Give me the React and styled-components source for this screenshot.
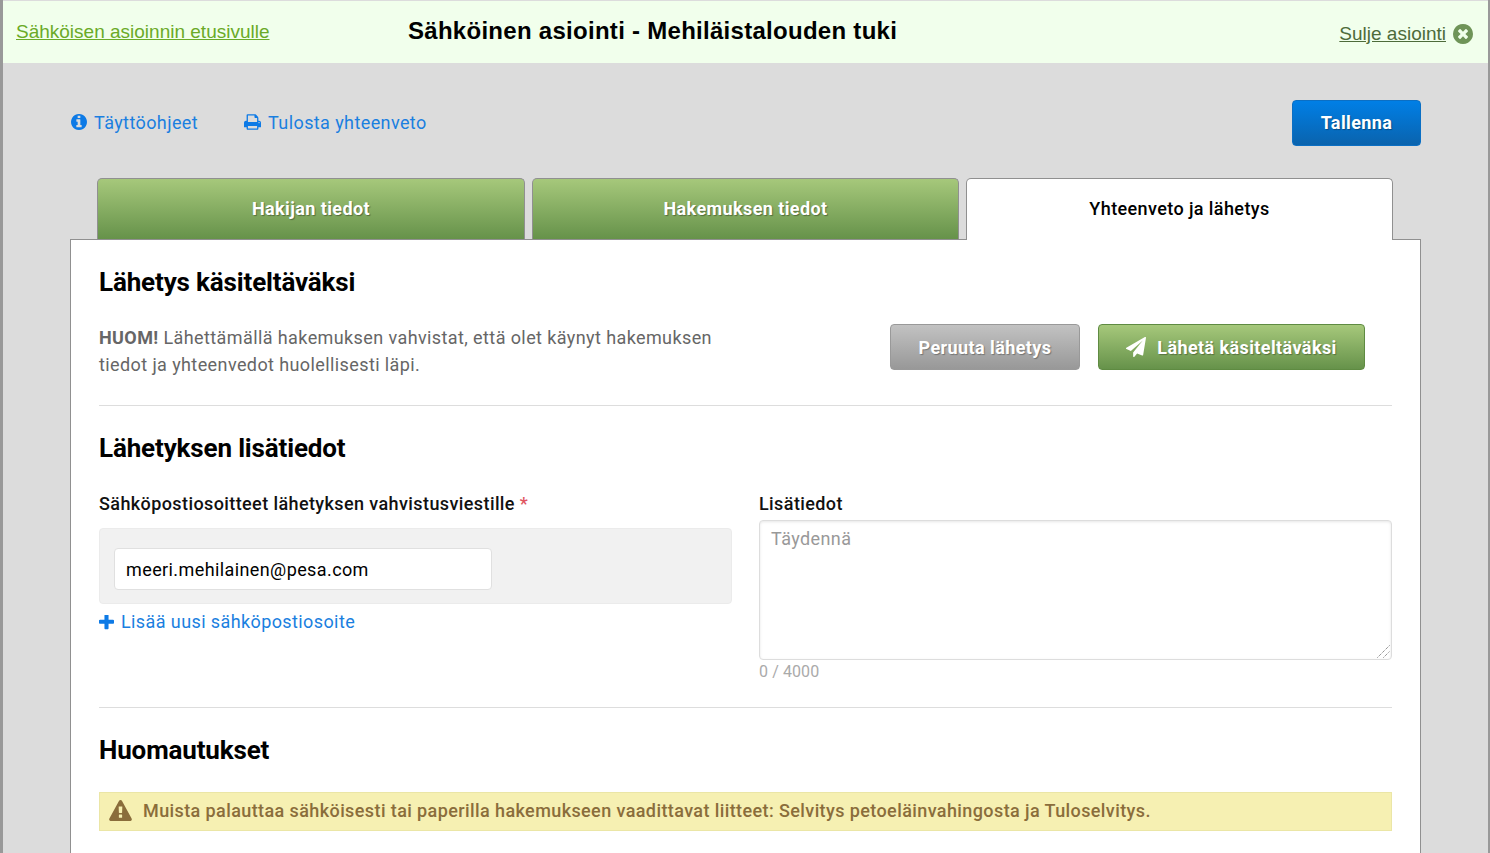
import React from 'react';
import styled, { createGlobalStyle } from 'styled-components';

const GlobalStyle = createGlobalStyle`
  html, body {
    margin: 0;
    padding: 0;
    height: 100%;
    overflow: hidden;
    background: #fff;
  }
  * { box-sizing: border-box; }
`;

// Font Awesome 4 style glyphs, viewBox cropped to the shape
const ICONS = {
  info: {
    box: '128 128 1536 1536',
    d: 'M1152 1376v-160q0-14-9-23t-23-9h-96v-512q0-14-9-23t-23-9h-320q-14 0-23 9t-9 23v160q0 14 9 23t23 9h96v320h-96q-14 0-23 9t-9 23v160q0 14 9 23t23 9h448q14 0 23-9t9-23zm-128-896v-160q0-14-9-23t-23-9h-192q-14 0-23 9t-9 23v160q0 14 9 23t23 9h192q14 0 23-9t9-23zm640 416q0 209-103 385.5t-279.5 279.5-385.5 103-385.5-103-279.5-279.5-103-385.5 103-385.5 279.5-279.5 385.5-103 385.5 103 279.5 279.5 103 385.5z',
  },
  print: {
    box: '64 128 1664 1536',
    d: 'M448 1536h896v-256h-896v256zm0-640h896v-384h-160q-40 0-68-28t-28-68v-160h-640v640zm1152 64q0-26-19-45t-45-19-45 19-19 45 19 45 45 19 45-19 19-45zm128 0v416q0 13-9.5 22.5t-22.5 9.5h-224v160q0 40-28 68t-68 28h-960q-40 0-68-28t-28-68v-160h-224q-13 0-22.5-9.5t-9.5-22.5v-416q0-79 56.5-135.5t135.5-56.5h64v-544q0-40 28-68t68-28h672q40 0 88 20t76 48l152 152q28 28 48 76t20 88v256h64q79 0 135.5 56.5t56.5 135.5z',
  },
  plus: {
    box: '192 192 1408 1408',
    d: 'M1600 736v192q0 40-28 68t-68 28h-416v416q0 40-28 68t-68 28h-192q-40 0-68-28t-28-68v-416h-416q-40 0-68-28t-28-68v-192q0-40 28-68t68-28h416v-416q0-40 28-68t68-28h192q40 0 68 28t28 68v416h416q40 0 68 28t28 68z',
  },
  plane: {
    box: '0 0 1792 1792',
    d: 'M1764 11q33 24 27 64l-256 1536q-5 29-32 45-14 8-31 8-11 0-24-5l-453-185-242 295q-18 23-49 23-13 0-22-4-19-7-30.5-23.5t-11.5-36.5v-349l864-1059-1069 925-395-162q-37-14-40-55-2-40 32-59l1664-960q15-9 32-9 20 0 36 11z',
  },
  warning: {
    box: '0 0 1792 1664',
    d: 'M1024 1375v-190q0-14-9.5-23.5t-22.5-9.5h-192q-13 0-22.5 9.5t-9.5 23.5v190q0 14 9.5 23.5t22.5 9.5h192q13 0 22.5-9.5t9.5-23.5zm-2-374l18-459q0-12-10-19-13-11-24-11h-220q-11 0-24 11-10 7-10 21l17 457q0 10 10 16.5t24 6.5h185q14 0 23.5-6.5t10.5-16.5zm-14-934l768 1408q35 63-2 126-17 29-46.5 46t-63.5 17h-1536q-34 0-63.5-17t-46.5-46q-37-63-2-126l768-1408q17-31 47-49t65-18 65 18 47 49z',
  },
  close: {
    box: '128 128 1536 1536',
    d: 'M1277 1122q0-26-19-45l-181-181 181-181q19-19 19-45 0-27-19-46l-90-90q-19-19-46-19-26 0-45 19l-181 181-181-181q-19-19-45-19-27 0-46 19l-90 90q-19 19-19 46 0 26 19 45l181 181-181 181q-19 19-19 45 0 27 19 46l90 90q19 19 46 19 26 0 45-19l181-181 181 181q19 19 45 19 27 0 46-19l90-90q19-19 19-46zm387-226q0 209-103 385.5t-279.5 279.5-385.5 103-385.5-103-279.5-279.5-103-385.5 103-385.5 279.5-279.5 385.5-103 385.5 103 279.5 279.5 103 385.5z',
  },
};

const IconSvg = styled.svg`
  display: block;
  flex: none;
  fill: currentColor;
  width: ${(p) => p.$w}px;
  height: ${(p) => p.$h || p.$w}px;
`;

const Icon = ({ name, w, h }) => (
  <IconSvg viewBox={ICONS[name].box} $w={w} $h={h}>
    <path d={ICONS[name].d} />
  </IconSvg>
);

const Frame = styled.div`
  width: 1490px;
  height: 853px;
  overflow: hidden;
  padding-top: 1px;
  background: #dcdcdc;
  border-left: 3px solid #999;
  border-right: 2px solid #999;
  font-family: Roboto, 'Liberation Sans', sans-serif;
  letter-spacing: 0.4px;
`;

const Header = styled.header`
  height: 62px;
  background: #f1ffec;
  display: flex;
  align-items: center;
  font-family: 'Liberation Sans', Arial, sans-serif;
  letter-spacing: 0;
  padding: 0 15px 0 13px;
`;

const HomeLink = styled.a`
  width: 392px;
  font-size: 19px;
  color: #6aaa27;
  text-decoration: underline;
`;

const HeaderTitle = styled.h1`
  flex: 1;
  margin: 0;
  padding-bottom: 2px;
  font-size: 24px;
  line-height: 60px;
  font-weight: 700;
  letter-spacing: 0.28px;
  color: #000;
`;

const CloseLink = styled.a`
  display: flex;
  align-items: center;
  gap: 7px;
  padding-top: 4px;
  font-size: 19px;
  color: #4d6b3a;
  text-decoration: underline;
  & svg {
    color: #6f9458;
  }
`;

const Main = styled.main`
  padding: 37px 67px 0;
`;

const Toolbar = styled.div`
  height: 46px;
  display: flex;
  align-items: center;
  gap: 46px;
  padding-left: 1px;
`;

const ToolLink = styled.a`
  display: flex;
  align-items: center;
  gap: 7px;
  padding-bottom: 2px;
  font-size: 18px;
  color: #1a7fe0;
  & svg {
    color: #0d7ae6;
  }
`;

const SaveButton = styled.button`
  margin-left: auto;
  width: 129px;
  height: 46px;
  padding: 0 0 2px;
  border: 1px solid #0b6fc4;
  border-radius: 4px;
  background: linear-gradient(#007fe6, #0a63ad);
  color: #fff;
  font: 700 18px Roboto, sans-serif;
  letter-spacing: 0.4px;
  text-shadow: 1px 1px 1px rgba(0, 0, 0, 0.3);
`;

const Tabs = styled.nav`
  display: grid;
  grid-template-columns: 428px 427px 427px;
  gap: 7px;
  margin: 32px 28px 0 27px;
  height: 62px;
  position: relative;
  z-index: 1;
`;

const Tab = styled.div`
  height: ${(p) => (p.$active ? '62px' : '61px')};
  display: flex;
  align-items: center;
  justify-content: center;
  padding-bottom: ${(p) => (p.$active ? '2px' : '1px')};
  font-size: 18px;
  border: 1px solid #909090;
  border-bottom: none;
  border-radius: 5px 5px 0 0;
  ${(p) =>
    p.$active
      ? `
    background: #fff;
    color: #000;
    font-weight: 500;
  `
      : `
    background: linear-gradient(#a6c87b, #66924a);
    color: #fff;
    font-weight: 700;
    text-shadow: 1px 1px 1px rgba(0, 0, 0, 0.35);
  `}
`;

const Panel = styled.section`
  margin-top: -1px;
  background: #fff;
  border: 1px solid #909090;
  padding: 0 28px;
  height: 620px;
`;

const SectionTitle = styled.h2`
  margin: 0;
  font-size: 26px;
  line-height: 34px;
  font-weight: 700;
  color: #000;
  letter-spacing: -0.15px;
`;

const SubmitSection = styled.div`
  padding: 25px 0 27px;
  border-bottom: 1px solid #ddd;
`;

const SubmitRow = styled.div`
  display: flex;
  align-items: flex-start;
  margin-top: 25px;
`;

const Notice = styled.p`
  margin: 0;
  width: 791px;
  padding-right: 170px;
  font-size: 18px;
  line-height: 27px;
  color: #666;
  & strong {
    font-weight: 700;
  }
`;

const ActionButton = styled.button`
  height: 46px;
  padding: 0;
  border-radius: 4px;
  color: #fff;
  font: 700 18px Roboto, sans-serif;
  letter-spacing: 0.4px;
  text-shadow: 1px 1px 1px rgba(0, 0, 0, 0.3);
  display: flex;
  align-items: center;
  justify-content: center;
  gap: 11px;
  width: ${(p) => p.$width}px;
  margin-right: 18px;
  border: 1px solid ${(p) => (p.$green ? '#5f8b42' : '#999')};
  background: ${(p) =>
    p.$green ? 'linear-gradient(#a6c87b, #66924a)' : 'linear-gradient(#c2c2c2, #989898)'};
`;

const DetailsSection = styled.div`
  padding: 25px 0 24px;
  border-bottom: 1px solid #ddd;
`;

const Columns = styled.div`
  display: grid;
  grid-template-columns: 633px 633px;
  gap: 27px;
  margin-top: 27px;
`;

const FieldLabel = styled.label`
  display: block;
  font-size: 18px;
  line-height: 24px;
  font-weight: 500;
  color: #111;
  & span {
    color: #e0555f;
  }
`;

const EmailBox = styled.div`
  margin-top: 12px;
  height: 76px;
  padding: 19px 14px;
  background: #f1f1f1;
  border: 1px solid #ebebeb;
  border-radius: 4px;
`;

const EmailInput = styled.input`
  display: block;
  width: 378px;
  height: 42px;
  padding: 0 11px;
  background: #fff;
  border: 1px solid #e0e0e0;
  border-radius: 4px;
  color: #000;
  font: 400 18px Roboto, sans-serif;
  letter-spacing: 0.4px;
  outline: none;
`;

const AddLink = styled.a`
  display: flex;
  align-items: center;
  gap: 7px;
  margin-top: 6px;
  font-size: 18px;
  line-height: 24px;
  color: #1a7fe0;
  & svg {
    color: #0d7ae6;
  }
`;

const TextareaWrap = styled.div`
  position: relative;
  margin-top: 4px;
`;

const Textarea = styled.textarea`
  display: block;
  width: 633px;
  height: 140px;
  padding: 7px 11px;
  resize: none;
  background: #fff;
  border: 1px solid #ddd;
  border-radius: 4px;
  box-shadow: inset 0 1px 3px rgba(0, 0, 0, 0.1);
  color: #000;
  font: 400 18px Roboto, sans-serif;
  letter-spacing: 0.4px;
  outline: none;
  &::placeholder {
    color: #999;
  }
`;

const ResizeGrip = styled.svg`
  position: absolute;
  right: 2px;
  bottom: 2px;
  width: 13px;
  height: 13px;
  stroke: #666;
  stroke-width: 1;
  stroke-dasharray: 1 1;
`;

const Counter = styled.div`
  margin-top: 1px;
  font-size: 16px;
  line-height: 22px;
  letter-spacing: 0.1px;
  color: #aaa;
`;

const RemarksSection = styled.div`
  padding-top: 25px;
`;

const Alert = styled.div`
  display: flex;
  align-items: center;
  gap: 11px;
  height: 39px;
  margin-top: 25px;
  padding: 0 9px 2px;
  background: #f6f0b2;
  border: 1px solid #ebe6a6;
  color: #8a6d3b;
  font-size: 18px;
  font-weight: 500;
`;

const App = () => (
  <>
    <GlobalStyle />
    <Frame>
      <Header>
        <HomeLink>Sähköisen asioinnin etusivulle</HomeLink>
        <HeaderTitle>Sähköinen asiointi - Mehiläistalouden tuki</HeaderTitle>
        <CloseLink>
          Sulje asiointi
          <Icon name="close" w={20} />
        </CloseLink>
      </Header>

      <Main>
        <Toolbar>
          <ToolLink>
            <Icon name="info" w={16} />
            Täyttöohjeet
          </ToolLink>
          <ToolLink>
            <Icon name="print" w={17} h={16} />
            Tulosta yhteenveto
          </ToolLink>
          <SaveButton>Tallenna</SaveButton>
        </Toolbar>

        <Tabs>
          <Tab>Hakijan tiedot</Tab>
          <Tab>Hakemuksen tiedot</Tab>
          <Tab $active>Yhteenveto ja lähetys</Tab>
        </Tabs>

        <Panel>
          <SubmitSection>
            <SectionTitle>Lähetys käsiteltäväksi</SectionTitle>
            <SubmitRow>
              <Notice>
                <strong>HUOM!</strong> Lähettämällä hakemuksen vahvistat, että olet käynyt hakemuksen
                tiedot ja yhteenvedot huolellisesti läpi.
              </Notice>
              <ActionButton $width={190}>Peruuta lähetys</ActionButton>
              <ActionButton $width={267} $green>
                <Icon name="plane" w={20} />
                Lähetä käsiteltäväksi
              </ActionButton>
            </SubmitRow>
          </SubmitSection>

          <DetailsSection>
            <SectionTitle>Lähetyksen lisätiedot</SectionTitle>
            <Columns>
              <div>
                <FieldLabel>
                  Sähköpostiosoitteet lähetyksen vahvistusviestille <span>*</span>
                </FieldLabel>
                <EmailBox>
                  <EmailInput defaultValue="meeri.mehilainen@pesa.com" />
                </EmailBox>
                <AddLink>
                  <Icon name="plus" w={15} />
                  Lisää uusi sähköpostiosoite
                </AddLink>
              </div>
              <div>
                <FieldLabel>Lisätiedot</FieldLabel>
                <TextareaWrap>
                  <Textarea placeholder="Täydennä" />
                  <ResizeGrip viewBox="0 0 13 13">
                    <line x1="0.5" y1="12.5" x2="12.5" y2="0.5" />
                    <line x1="6.5" y1="12.5" x2="12.5" y2="6.5" />
                  </ResizeGrip>
                </TextareaWrap>
                <Counter>0 / 4000</Counter>
              </div>
            </Columns>
          </DetailsSection>

          <RemarksSection>
            <SectionTitle>Huomautukset</SectionTitle>
            <Alert>
              <Icon name="warning" w={23} h={21} />
              Muista palauttaa sähköisesti tai paperilla hakemukseen vaadittavat liitteet: Selvitys
              petoeläinvahingosta ja Tuloselvitys.
            </Alert>
          </RemarksSection>
        </Panel>
      </Main>
    </Frame>
  </>
);

export default App;
